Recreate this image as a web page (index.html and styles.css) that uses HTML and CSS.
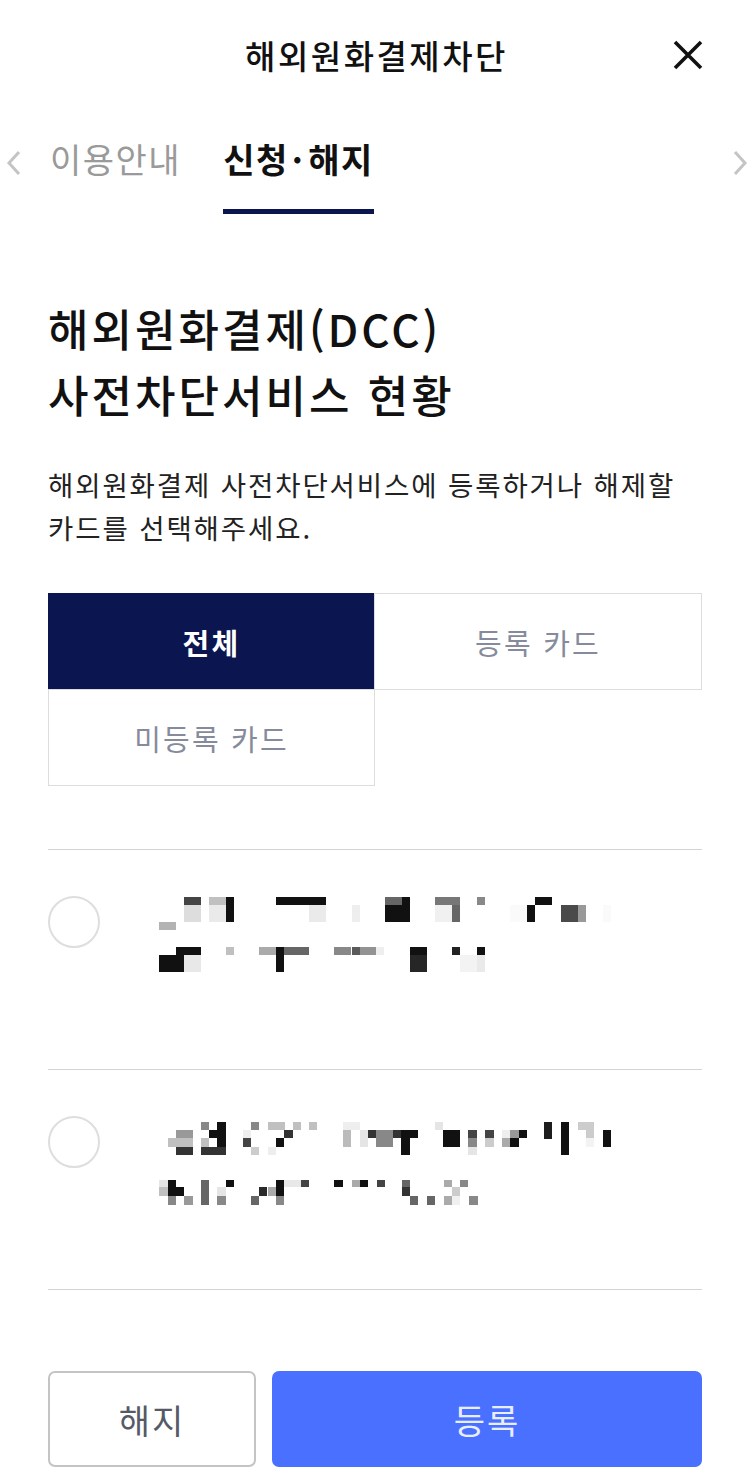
FILE: index.html
```html
<!DOCTYPE html>
<html lang="ko">
<head>
  <meta charset="UTF-8">
  <meta name="viewport" content="width=device-width, initial-scale=1.0">
  <title>해외원화결제차단</title>
  <link rel="stylesheet" href="styles.css">
</head>
<body>
  <div class="page">
    <header class="top-bar">
      <h1 class="top-title">해외원화결제차단</h1>
      <button class="close-btn" aria-label="닫기">
        <svg width="30" height="30" viewBox="0 0 30 30"><path d="M2 2 L28 28 M28 2 L2 28" stroke="#111" stroke-width="3.6" fill="none"/></svg>
      </button>
    </header>

    <nav class="tab-bar">
      <span class="tab-arrow left">
        <svg width="16" height="26" viewBox="0 0 16 26"><path d="M13 2 L3 13 L13 24" stroke="#c4c4c4" stroke-width="3" fill="none"/></svg>
      </span>
      <a class="tab">이용안내</a>
      <a class="tab active">신청<span class="dot">·</span>해지</a>
      <span class="tab-arrow right">
        <svg width="16" height="26" viewBox="0 0 16 26"><path d="M3 2 L13 13 L3 24" stroke="#c4c4c4" stroke-width="3" fill="none"/></svg>
      </span>
    </nav>

    <main class="content">
      <h2 class="heading">해외원화결제(DCC)<br>사전차단서비스 현황</h2>
      <p class="desc">해외원화결제 사전차단서비스에 등록하거나 해제할<br>카드를 선택해주세요.</p>

      <div class="filter">
        <button class="filter-item active">전체</button>
        <button class="filter-item">등록 카드</button>
        <button class="filter-item">미등록 카드</button>
      </div>

      <ul class="card-list">
        <li class="card-row">
          <span class="radio"></span>
          <svg class="masked" width="470" height="80" viewBox="150 895 470 80" shape-rendering="crispEdges">
            <rect x="158.5" y="921" width="17" height="8" fill="#b3b3b3"/>
            <rect x="184" y="896" width="17" height="8" fill="#444"/>
            <rect x="184" y="904" width="17" height="17" fill="#ddd"/>
            <rect x="209" y="896" width="17" height="8" fill="#c0c0c0"/>
            <rect x="209" y="904" width="17" height="17" fill="#eaeaea"/>
            <rect x="226" y="896" width="8" height="25" fill="#111"/>
            <rect x="276" y="896" width="50" height="8" fill="#111"/>
            <rect x="309" y="904" width="17" height="17" fill="#eaeaea"/>
            <rect x="351.5" y="904" width="8" height="17" fill="#eee"/>
            <rect x="384.6" y="896" width="17" height="8" fill="#666"/>
            <rect x="384.6" y="904" width="17" height="17" fill="#111"/>
            <rect x="401.5" y="896" width="8.5" height="25" fill="#111"/>
            <rect x="435" y="896" width="25" height="8" fill="#777"/>
            <rect x="435" y="904" width="17" height="17" fill="#f0f0f0"/>
            <rect x="451.5" y="904" width="8.5" height="17" fill="#666"/>
            <rect x="477" y="896" width="8" height="8" fill="#888"/>
            <rect x="510" y="904" width="17" height="17" fill="#fafafa"/>
            <rect x="527" y="904" width="8" height="17" fill="#111"/>
            <rect x="535" y="896" width="17" height="8" fill="#111"/>
            <rect x="561" y="904" width="17" height="17" fill="#4a4a4a"/>
            <rect x="578" y="904" width="8" height="17" fill="#999"/>
            <rect x="603" y="904" width="8" height="17" fill="#fafafa"/>
            <rect x="158.5" y="954" width="25" height="17" fill="#111"/>
            <rect x="176" y="946" width="25" height="8" fill="#111"/>
            <rect x="184" y="954" width="17" height="17" fill="#e8e8e8"/>
            <rect x="226" y="946" width="8" height="8" fill="#c0c0c0"/>
            <rect x="259" y="946" width="17" height="8" fill="#aaa"/>
            <rect x="276" y="946" width="8" height="25" fill="#111"/>
            <rect x="284" y="946" width="25" height="8" fill="#666"/>
            <rect x="334" y="946" width="17" height="8" fill="#888"/>
            <rect x="351.5" y="946" width="8" height="8" fill="#5a5a5a"/>
            <rect x="359.6" y="946" width="17" height="8" fill="#939393"/>
            <rect x="376" y="946" width="8" height="8" fill="#eee"/>
            <rect x="410" y="946" width="17" height="8" fill="#111"/>
            <rect x="410" y="954" width="17" height="17" fill="#262626"/>
            <rect x="452" y="946" width="8" height="8" fill="#222"/>
            <rect x="460" y="954" width="17" height="17" fill="#f3f3f3"/>
            <rect x="477" y="946" width="8" height="8" fill="#111"/>
            <rect x="477" y="954" width="8" height="17" fill="#eaeaea"/>
          </svg>
        </li>
        <li class="card-row">
          <span class="radio"></span>
          <svg class="masked" width="470" height="95" viewBox="150 1115 470 95" shape-rendering="crispEdges">
            <rect x="176" y="1129" width="17" height="8" fill="#999"/>
            <rect x="168" y="1137" width="25" height="9" fill="#c0c0c0"/>
            <rect x="176" y="1146" width="17" height="8" fill="#333"/>
            <rect x="201" y="1121" width="8" height="8" fill="#888"/>
            <rect x="209" y="1129" width="8" height="8" fill="#111"/>
            <rect x="217" y="1121" width="9" height="25" fill="#111"/>
            <rect x="201" y="1137" width="8" height="9" fill="#c0c0c0"/>
            <rect x="201" y="1146" width="25" height="8" fill="#333"/>
            <rect x="243" y="1129" width="8" height="8" fill="#eee"/>
            <rect x="243" y="1137" width="8" height="9" fill="#444"/>
            <rect x="251" y="1121" width="8" height="8" fill="#888"/>
            <rect x="251" y="1146" width="8" height="8" fill="#ccc"/>
            <rect x="268" y="1121" width="17" height="8" fill="#c0c0c0"/>
            <rect x="284" y="1129" width="9" height="8" fill="#333"/>
            <rect x="276" y="1137" width="8" height="9" fill="#111"/>
            <rect x="268" y="1146" width="8" height="8" fill="#eee"/>
            <rect x="293" y="1121" width="8" height="8" fill="#c0c0c0"/>
            <rect x="309" y="1121" width="8" height="8" fill="#c0c0c0"/>
            <rect x="343" y="1121" width="17" height="8" fill="#eee"/>
            <rect x="343" y="1129" width="8" height="17" fill="#bbb"/>
            <rect x="360" y="1129" width="8" height="17" fill="#e5e5e5"/>
            <rect x="368" y="1129" width="8" height="8" fill="#333"/>
            <rect x="376" y="1129" width="17" height="17" fill="#888"/>
            <rect x="393" y="1129" width="8" height="8" fill="#333"/>
            <rect x="401" y="1129" width="17" height="8" fill="#111"/>
            <rect x="401" y="1137" width="9" height="17" fill="#111"/>
            <rect x="435" y="1121" width="8" height="8" fill="#e5e5e5"/>
            <rect x="443" y="1129" width="17" height="17" fill="#111"/>
            <rect x="468" y="1129" width="9" height="8" fill="#444"/>
            <rect x="468" y="1137" width="9" height="9" fill="#888"/>
            <rect x="468" y="1146" width="9" height="8" fill="#e5e5e5"/>
            <rect x="485" y="1129" width="9" height="8" fill="#444"/>
            <rect x="485" y="1137" width="9" height="9" fill="#ccc"/>
            <rect x="502" y="1129" width="8" height="8" fill="#eee"/>
            <rect x="510" y="1129" width="9" height="8" fill="#999"/>
            <rect x="502" y="1137" width="8" height="9" fill="#aaa"/>
            <rect x="510" y="1137" width="9" height="9" fill="#111"/>
            <rect x="519" y="1129" width="8" height="8" fill="#111"/>
            <rect x="544" y="1121" width="8" height="17" fill="#1e1e1e"/>
            <rect x="561" y="1121" width="8" height="33" fill="#111"/>
            <rect x="578" y="1121" width="16" height="8" fill="#ccc"/>
            <rect x="586" y="1129" width="8" height="8" fill="#ccc"/>
            <rect x="586" y="1137" width="8" height="9" fill="#f3f3f3"/>
            <rect x="603" y="1129" width="8" height="17" fill="#111"/>
            <rect x="158.5" y="1179" width="9" height="7" fill="#e5e5e5"/>
            <rect x="168" y="1179" width="8" height="16" fill="#111"/>
            <rect x="158.5" y="1186" width="9" height="9" fill="#c0c0c0"/>
            <rect x="176" y="1186" width="8" height="9" fill="#111"/>
            <rect x="168" y="1195" width="8" height="9" fill="#888"/>
            <rect x="184" y="1195" width="9" height="9" fill="#999"/>
            <rect x="201" y="1179" width="8" height="25" fill="#666"/>
            <rect x="217" y="1186" width="9" height="9" fill="#e5e5e5"/>
            <rect x="226" y="1179" width="8" height="7" fill="#111"/>
            <rect x="217" y="1195" width="9" height="9" fill="#888"/>
            <rect x="251" y="1195" width="8" height="9" fill="#666"/>
            <rect x="259" y="1186" width="8" height="9" fill="#2a2a2a"/>
            <rect x="268" y="1186" width="8" height="9" fill="#aaa"/>
            <rect x="276" y="1179" width="8" height="16" fill="#111"/>
            <rect x="276" y="1195" width="8" height="9" fill="#888"/>
            <rect x="284" y="1179" width="17" height="7" fill="#e8e8e8"/>
            <rect x="301" y="1179" width="8" height="7" fill="#444"/>
            <rect x="334" y="1179" width="9" height="7" fill="#111"/>
            <rect x="351.5" y="1179" width="8" height="7" fill="#aaa"/>
            <rect x="359.6" y="1179" width="8" height="7" fill="#111"/>
            <rect x="376.5" y="1179" width="8" height="7" fill="#444"/>
            <rect x="401.5" y="1179" width="8" height="7" fill="#666"/>
            <rect x="401.5" y="1186" width="8" height="9" fill="#333"/>
            <rect x="410" y="1195" width="8" height="9" fill="#666"/>
            <rect x="426.5" y="1195" width="8" height="9" fill="#666"/>
            <rect x="443.5" y="1179" width="8" height="7" fill="#aaa"/>
            <rect x="452" y="1186" width="8" height="9" fill="#ccc"/>
            <rect x="443.5" y="1195" width="8" height="9" fill="#aaa"/>
            <rect x="452" y="1195" width="8" height="9" fill="#f0f0f0"/>
            <rect x="460" y="1179" width="8" height="7" fill="#888"/>
            <rect x="468.5" y="1195" width="9" height="9" fill="#888"/>
          </svg>
        </li>
      </ul>

      <div class="actions">
        <button class="btn btn-cancel">해지</button>
        <button class="btn btn-submit">등록</button>
      </div>
    </main>
  </div>
</body>
</html>
```

FILE: styles.css
```css
body {
  margin: 0;
  padding: 0;
  background-color: #fff;
  font-family: "Noto Sans CJK KR", "Noto Sans", sans-serif;
  color: #111;
}

button {
  font-family: inherit;
  cursor: pointer;
}

.page {
  width: 750px;
}

.top-bar {
  height: 110px;
  display: flex;
  align-items: center;
  justify-content: center;
  position: relative;
}

.top-title {
  margin: 0 0 0 3px;
  font-size: 33px;
  font-weight: 500;
  letter-spacing: 2.5px;
  color: #111;
}

.close-btn {
  position: absolute;
  right: 47px;
  top: 40px;
  width: 30px;
  height: 30px;
  padding: 0;
  border: none;
  background: none;
  display: flex;
}

.tab-bar {
  height: 105px;
  display: flex;
  align-items: flex-start;
  padding-left: 50px;
  gap: 42px;
  position: relative;
}

.tab-arrow {
  position: absolute;
  top: 40px;
}

.tab-arrow.left {
  left: 6px;
}

.tab-arrow.right {
  right: 2px;
}

.tab {
  font-size: 34px;
  line-height: 1;
  letter-spacing: 1.5px;
  padding-top: 32px;
  padding-bottom: 33px;
  color: #9a9a9a;
  border-bottom: 5px solid transparent;
}

.tab.active {
  color: #111;
  font-weight: 700;
  border-bottom-color: #0b1550;
}

.tab .dot {
  margin: 0 4px 0 3px;
}

.content {
  padding: 0 48px;
}

.heading {
  margin: 80px 0 0;
  font-size: 44px;
  font-weight: 500;
  line-height: 66px;
  letter-spacing: 3px;
  color: #111;
}

.desc {
  margin: 36px 0 0;
  font-size: 27.5px;
  line-height: 43px;
  letter-spacing: 1.9px;
  color: #222;
}

.filter {
  margin-top: 44px;
  display: grid;
  grid-template-columns: 1fr 1fr;
}

.filter-item {
  height: 97px;
  border: 1px solid #ddd;
  background: #fff;
  font-size: 29px;
  letter-spacing: 2.2px;
  color: #868b9c;
  margin: 0 0 -1px -1px;
}

.filter-item:first-child,
.filter-item:nth-child(3) {
  margin-left: 0;
}

.filter-item.active {
  background-color: #0b1550;
  border-color: #0b1550;
  color: #fff;
  font-weight: 700;
}

.card-list {
  list-style: none;
  margin: 64px 0 0;
  padding: 0;
  border-top: 1px solid #d4d4d4;
}

.card-row {
  height: 173px;
  padding-top: 46px;
  display: flex;
  align-items: flex-start;
  border-bottom: 1px solid #d4d4d4;
}

.radio {
  width: 48px;
  height: 48px;
  border: 2px solid #dedede;
  border-radius: 50%;
  flex-shrink: 0;
}

.masked {
  margin-left: 50px;
  display: block;
}

.actions {
  margin-top: 81px;
  display: flex;
  gap: 16px;
}

.btn {
  height: 96px;
  border-radius: 7px;
  font-size: 34px;
  letter-spacing: 2px;
}

.btn-cancel {
  width: 208px;
  background: #fff;
  border: 2px solid #c4c4c4;
  color: #555a66;
}

.btn-submit {
  flex: 1;
  border: none;
  background-color: #4a70ff;
  color: #e9eeff;
}
```
